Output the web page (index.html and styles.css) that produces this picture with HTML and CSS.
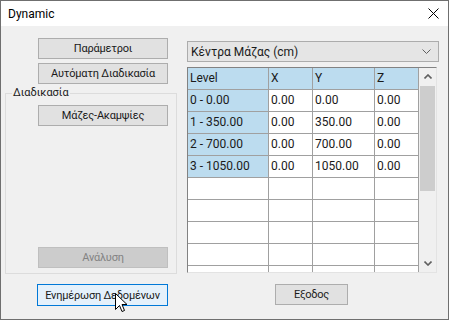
FILE: index.html
```html
<!DOCTYPE html>
<html lang="el">
<head>
    <meta charset="UTF-8">
    <title>Dynamic</title>
    <link rel="stylesheet" href="styles.css">
</head>
<body>
    <div class="window">
        <div class="titlebar">
            <span class="title">Dynamic</span>
            <svg class="close" width="11" height="11" viewBox="0 0 11 11">
                <path d="M0.5 0.5 L10.5 10.5 M10.5 0.5 L0.5 10.5" stroke="#000" stroke-width="1" fill="none"/>
            </svg>
        </div>
        <div class="client">
            <div class="leftPanel">
                <button class="btn">Παράμετροι</button>
                <button class="btn btnGap">Αυτόματη Διαδικασία</button>
                <fieldset class="group">
                    <legend>Διαδικασία</legend>
                    <div class="groupInner">
                        <button class="btn">Μάζες-Ακαμψίες</button>
                        <button class="btn disabled">Ανάλυση</button>
                    </div>
                </fieldset>
                <button class="btn focused">Ενημέρωση Δεδομένων</button>
            </div>
            <div class="rightPanel">
                <div class="combo">
                    <span>Κέντρα Μάζας (cm)</span>
                    <svg width="9" height="5" viewBox="0 0 9 5">
                        <path d="M0.5 0.5 L4.5 4.5 L8.5 0.5" stroke="#606060" fill="none"/>
                    </svg>
                </div>
                <div class="gridBox">
                    <div class="cells">
                        <div class="cell fixed">Level</div>
                        <div class="cell fixed">X</div>
                        <div class="cell fixed">Y</div>
                        <div class="cell fixed">Z</div>

                        <div class="cell fixed">0 - 0.00</div>
                        <div class="cell">0.00</div>
                        <div class="cell">0.00</div>
                        <div class="cell">0.00</div>

                        <div class="cell fixed">1 - 350.00</div>
                        <div class="cell">0.00</div>
                        <div class="cell">350.00</div>
                        <div class="cell">0.00</div>

                        <div class="cell fixed">2 - 700.00</div>
                        <div class="cell">0.00</div>
                        <div class="cell">700.00</div>
                        <div class="cell">0.00</div>

                        <div class="cell fixed">3 - 1050.00</div>
                        <div class="cell">0.00</div>
                        <div class="cell">1050.00</div>
                        <div class="cell">0.00</div>

                        <div class="cell"></div><div class="cell"></div><div class="cell"></div><div class="cell"></div>
                        <div class="cell"></div><div class="cell"></div><div class="cell"></div><div class="cell"></div>
                        <div class="cell"></div><div class="cell"></div><div class="cell"></div><div class="cell"></div>
                        <div class="cell"></div><div class="cell"></div><div class="cell"></div><div class="cell"></div>
                        <div class="cell"></div><div class="cell"></div><div class="cell"></div><div class="cell"></div>
                    </div>
                    <div class="scrollbar">
                        <div class="arrow">
                            <svg width="8" height="5" viewBox="0 0 8 5">
                                <path d="M0.5 4.5 L4 1 L7.5 4.5" stroke="#606060" stroke-width="1.6" fill="none"/>
                            </svg>
                        </div>
                        <div class="thumb"></div>
                        <div class="arrow arrowDown">
                            <svg width="8" height="5" viewBox="0 0 8 5">
                                <path d="M0.5 0.5 L4 4 L7.5 0.5" stroke="#606060" stroke-width="1.6" fill="none"/>
                            </svg>
                        </div>
                    </div>
                </div>
                <button class="btn exit">Εξοδος</button>
            </div>
        </div>
        <!-- mouse pointer over the update button -->
        <svg class="cursor" width="13" height="20" viewBox="0 0 13 20">
            <path d="M0.5 0.5 L0.5 16.5 L4.5 12.5 L7 18.5 L9.5 17.5 L7 11.5 L12 11.5 Z" fill="#fff" stroke="#000" stroke-width="1"/>
        </svg>
    </div>
</body>
</html>
```

FILE: styles.css
```css
body {
    margin: 0;
    font-family: Roboto, "Noto Sans", sans-serif;
    font-size: 11px;
    color: #1a1a1a;
    background: #f0f0f0;
}
.window {
    position: relative;
    width: 449px;
    height: 320px;
    box-sizing: border-box;
    border: 1px solid #6f6f6f;
    background-color: #f0f0f0;
    overflow: hidden;
}
.titlebar {
    height: 25px;
    background: #fff;
    display: flex;
    align-items: center;
    justify-content: space-between;
    padding: 0 9px 0 7px;
}
.title {
    font-size: 12px;
    color: #000;
}
.client {
    display: flex;
}
.leftPanel {
    width: 176px;
    padding-top: 12px;
    display: flex;
    flex-direction: column;
    align-items: flex-start;
}
.btn {
    font-family: inherit;
    font-size: 11px;
    letter-spacing: -0.2px;
    width: 130px;
    height: 21px;
    margin: 0 0 0 37px;
    padding: 0;
    background: #e1e1e1;
    border: 1px solid #adadad;
    color: #1a1a1a;
    line-height: 17px;
    white-space: nowrap;
}
.btnGap {
    margin-top: 4px;
}
.group {
    margin: 1px 0 0 4px;
    width: 172px;
    box-sizing: border-box;
    border: 1px solid #dcdcdc;
    padding: 0 0 5px 6px;
}
.group legend {
    padding: 0 1px;
    line-height: 16px;
}
.groupInner {
    height: 167px;
    padding-top: 4px;
    box-sizing: border-box;
    display: flex;
    flex-direction: column;
    justify-content: space-between;
}
.groupInner .btn {
    margin-left: 26px;
}
.disabled {
    background: #cccccc;
    border-color: #bfbfbf;
    color: #838383;
}
.focused {
    margin-top: 10px;
    margin-left: 36px;
    width: 131px;
    height: 22px;
    background: #e5f1fb;
    border-color: #0078d7;
}
.rightPanel {
    margin-left: 10px;
    padding-top: 15px;
    display: flex;
    flex-direction: column;
    align-items: flex-start;
}
.combo {
    width: 252px;
    height: 21px;
    box-sizing: border-box;
    border: 1px solid #acacac;
    background: #e5e5e5;
    display: flex;
    align-items: center;
    justify-content: space-between;
    padding: 0 7px 0 3px;
    font-size: 12px;
}
.gridBox {
    margin-top: 5px;
    width: 250px;
    height: 206px;
    box-sizing: border-box;
    border: 1px solid #828282;
    border-right-color: #e3e3e3;
    border-bottom-color: #e3e3e3;
    background: #fff;
    display: flex;
    overflow: hidden;
}
.cells {
    display: grid;
    grid-template-columns: 81px 44px 62px 44px;
    grid-auto-rows: 22px;
    align-content: start;
}
.cell {
    box-sizing: border-box;
    border-right: 1px solid #a0a0a0;
    border-bottom: 1px solid #a0a0a0;
    padding: 2px 0 0 2px;
    line-height: 17px;
    font-size: 12px;
    white-space: nowrap;
}
.fixed {
    background: #bcdcef;
}
.scrollbar {
    width: 17px;
    height: 100%;
    background: #f0f0f0;
    display: flex;
    flex-direction: column;
}
.arrow {
    height: 17px;
    display: flex;
    align-items: center;
    justify-content: center;
}
.arrowDown {
    margin-top: auto;
}
.thumb {
    margin: 1px 1px 0;
    height: 105px;
    background: #cdcdcd;
}
.exit {
    margin: 11px 0 0 88px;
    width: 73px;
}
.cursor {
    position: absolute;
    left: 114px;
    top: 292px;
}
```
